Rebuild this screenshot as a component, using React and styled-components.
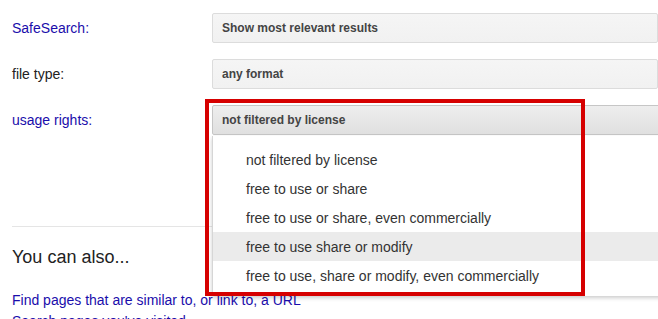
import React from "react";
import styled, { createGlobalStyle } from "styled-components";

const Global = createGlobalStyle`
	body {
		margin: 0;
		overflow: hidden;
		background: #fff;
		font-family: "Liberation Sans", Arial, sans-serif;
	}
`;

const licenseOptions = [
	"not filtered by license",
	"free to use or share",
	"free to use or share, even commercially",
	"free to use share or modify",
	"free to use, share or modify, even commercially",
];

const App = () => {
	return (
		<Page>
			<Global />
			<Form>
				<Row>
					<Label $link>SafeSearch:</Label>
					<Select>Show most relevant results</Select>
				</Row>
				<Row>
					<Label>file type:</Label>
					<Select>any format</Select>
				</Row>
				<Row>
					<Label $link>usage rights:</Label>
					<SelectWrap>
						<Select $open>not filtered by license</Select>
						<Menu>
							{licenseOptions.map((opt, i) => (
								<MenuItem key={opt} $hover={i === 3}>
									{opt}
								</MenuItem>
							))}
						</Menu>
						<Annotation />
					</SelectWrap>
				</Row>
			</Form>
			<Divider />
			<Heading>You can also...</Heading>
			<Links>
				<Link>Find pages that are similar to, or link to, a URL</Link>
				<Link>Search pages you've visited</Link>
			</Links>
		</Page>
	);
};

export default App;

const Page = styled.div`
	width: 658px;
	height: 319px;
	overflow: hidden;
	padding: 13px 0 0 12px;
	box-sizing: border-box;
`;

const Form = styled.div`
	display: flex;
	flex-direction: column;
	gap: 16px;
`;

const Row = styled.div`
	display: flex;
	align-items: center;
	height: 30px;
`;

const Label = styled.div`
	width: 200px;
	flex-shrink: 0;
	font-size: 14px;
	color: ${(props) => (props.$link ? "#1a0dab" : "#222")};
`;

const SelectWrap = styled.div`
	position: relative;
`;

const Select = styled.div`
	width: 470px;
	height: 30px;
	box-sizing: border-box;
	display: flex;
	align-items: center;
	padding-left: 9px;
	border: 1px solid ${(props) => (props.$open ? "#c6c6c6" : "#dcdcdc")};
	border-radius: 2px;
	background: ${(props) =>
		props.$open
			? "linear-gradient(#eeeeee, #e0e0e0)"
			: "linear-gradient(#f5f5f5, #f1f1f1)"};
	font-size: 12px;
	font-weight: bold;
	color: #444;
`;

const Menu = styled.div`
	position: absolute;
	top: 31px;
	left: 0;
	width: 470px;
	box-sizing: border-box;
	padding: 9px 0 6px;
	background: #fff;
	border-left: 1px solid #d6d6d6;
	box-shadow: 0 2px 4px rgba(0, 0, 0, 0.2);
	z-index: 1;
`;

const MenuItem = styled.div`
	height: 29px;
	display: flex;
	align-items: center;
	padding-left: 33px;
	font-size: 14px;
	color: #333;
	background: ${(props) => (props.$hover ? "#ebebeb" : "transparent")};
`;

const Annotation = styled.div`
	position: absolute;
	left: -7px;
	top: -6px;
	width: 380px;
	height: 197px;
	box-sizing: border-box;
	border: 4px solid #d60000;
	z-index: 2;
`;

const Divider = styled.div`
	margin-top: 91px;
	height: 1px;
	background: #e5e5e5;
`;

const Heading = styled.div`
	margin-top: 18px;
	font-size: 18px;
	line-height: 24px;
	color: #222;
`;

const Links = styled.div`
	margin-top: 21px;
	display: flex;
	flex-direction: column;
`;

const Link = styled.a`
	font-size: 14px;
	line-height: 21px;
	color: #1a0dab;
	text-decoration: none;
	cursor: pointer;
`;
